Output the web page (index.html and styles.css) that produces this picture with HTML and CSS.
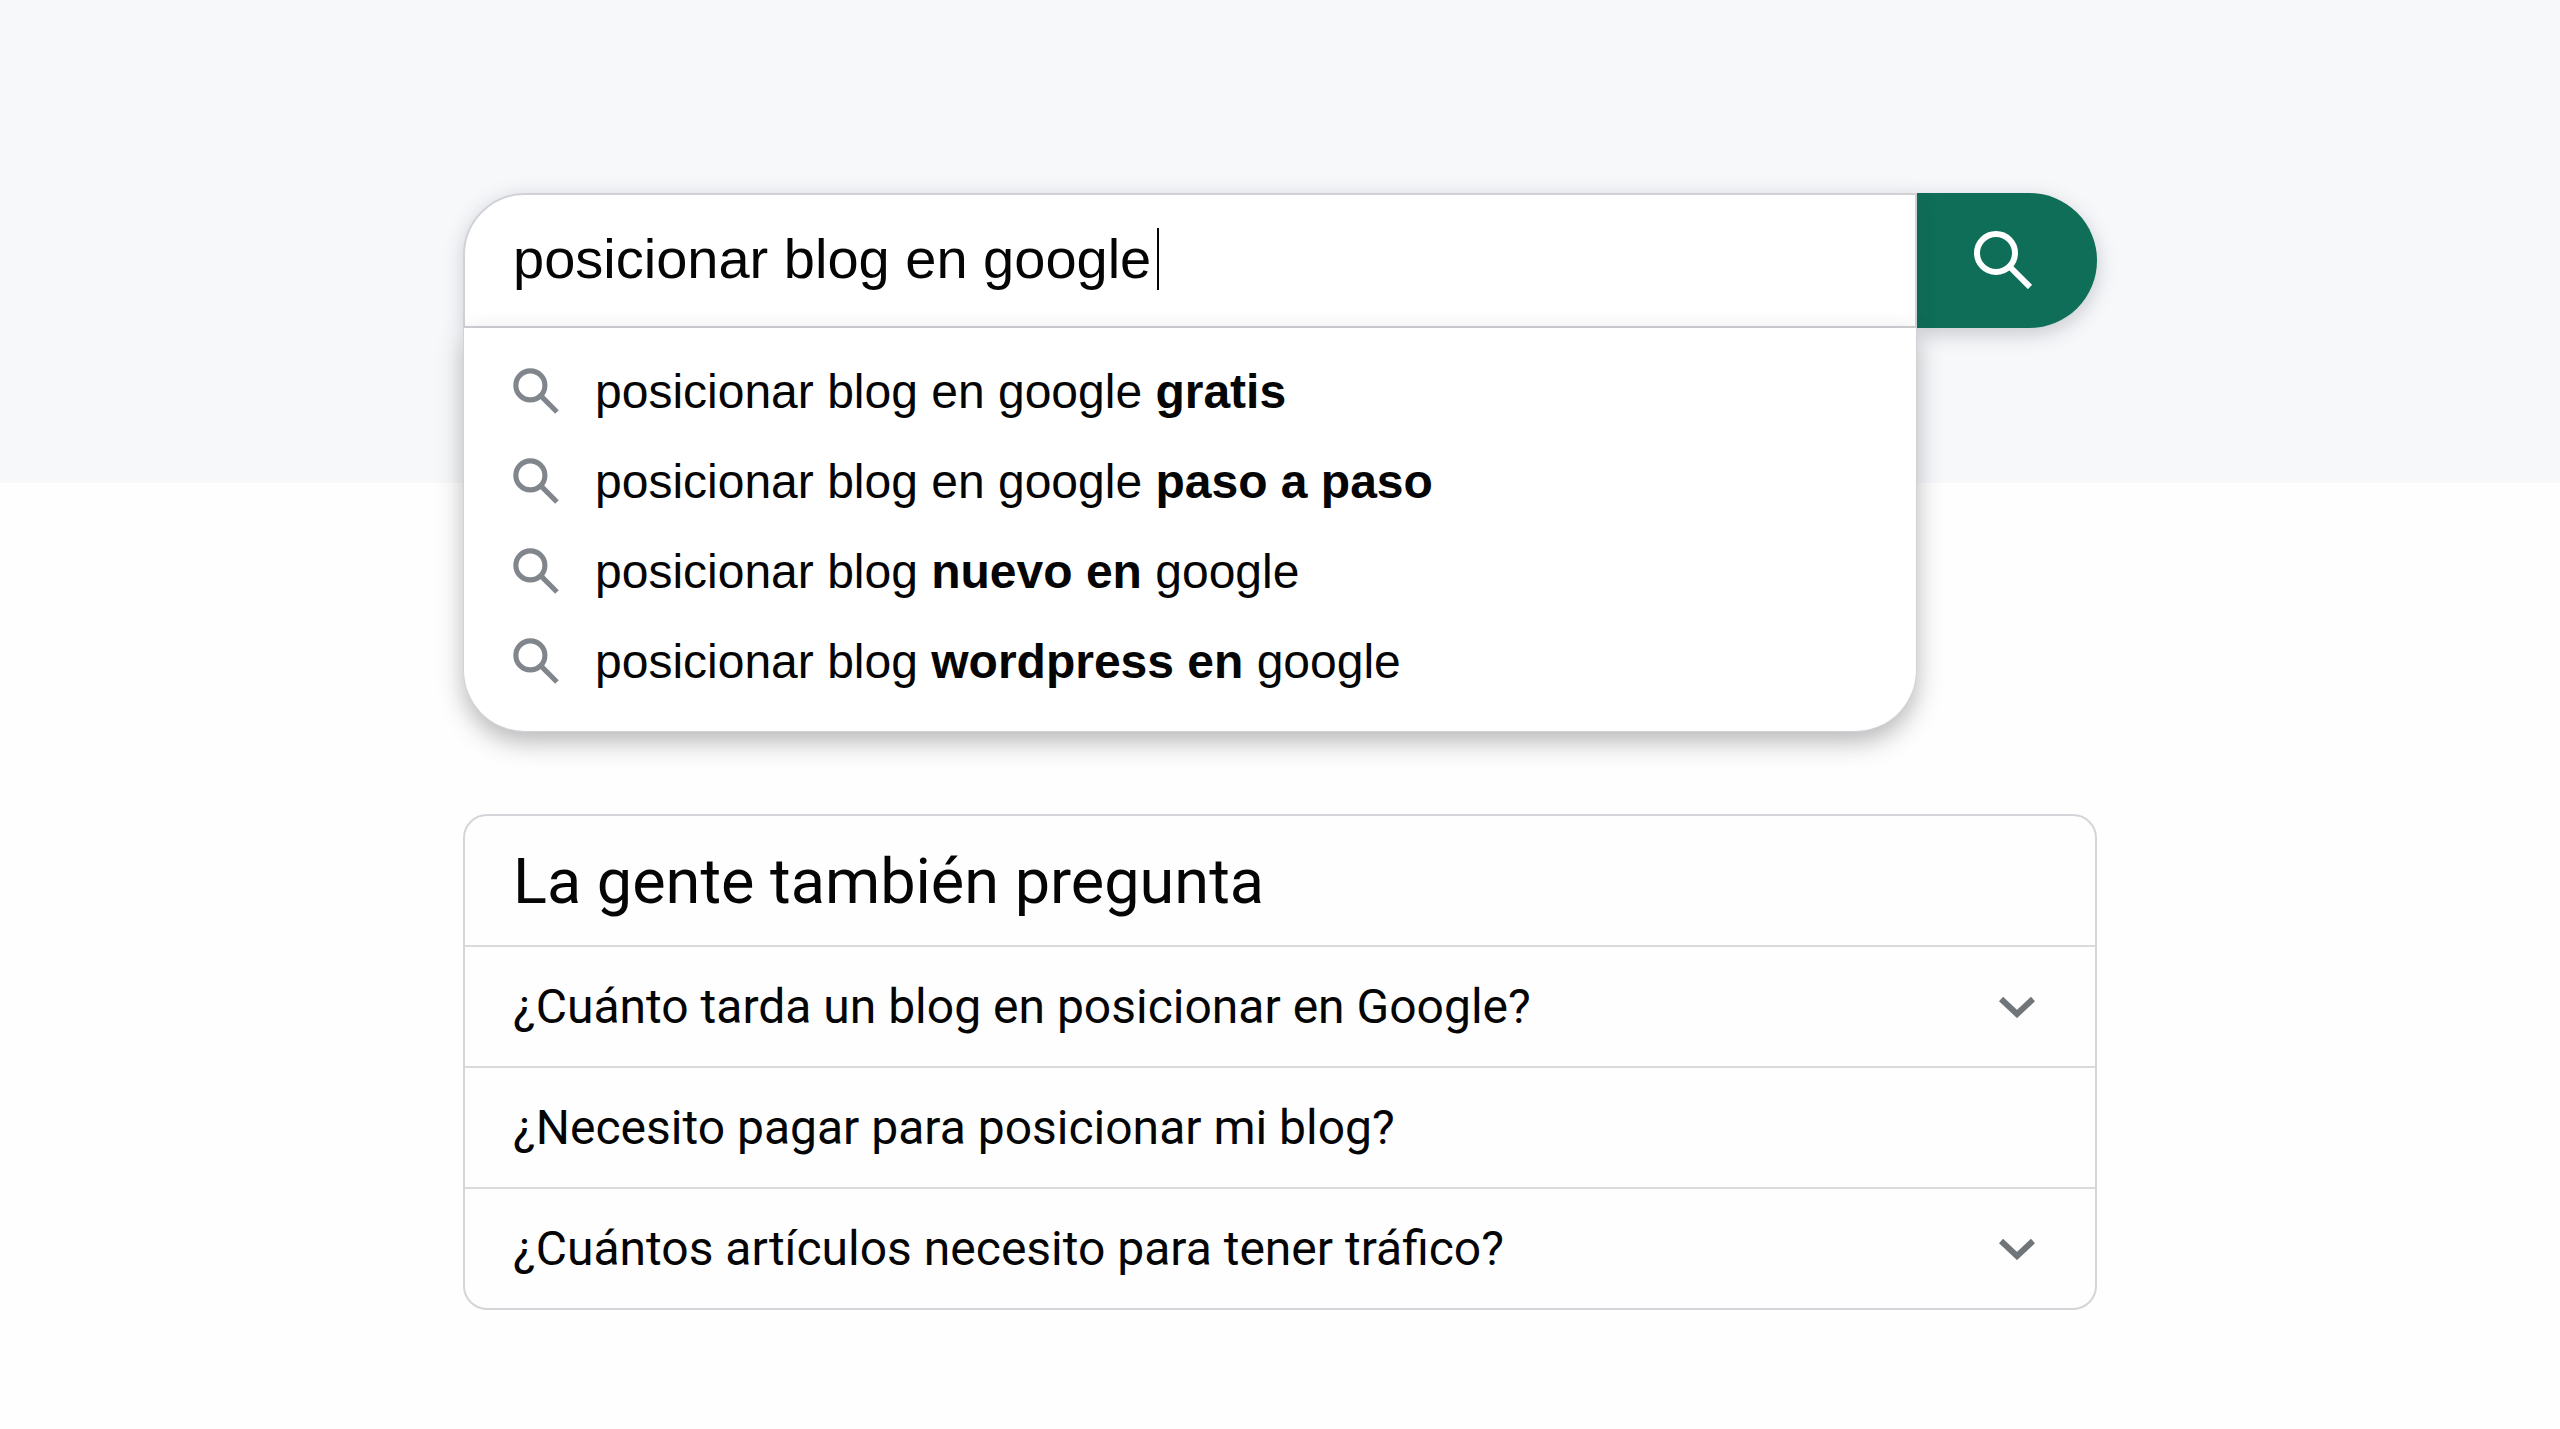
FILE: index.html
```html
<!DOCTYPE html>
<html lang="es">
<head>
  <meta charset="UTF-8" />
  <meta name="viewport" content="width=device-width, initial-scale=1.0" />
  <title>posicionar blog en google</title>
  <link rel="stylesheet" href="styles.css">
</head>
<body>
  <svg class="sprite" aria-hidden="true">
    <symbol id="lupa" viewBox="0 0 45 45">
      <circle cx="17" cy="17" r="14.2" fill="none" stroke="currentColor" stroke-width="5" />
      <path d="M28 28L43 43" fill="none" stroke="currentColor" stroke-width="5" />
    </symbol>
    <symbol id="flecha" viewBox="0 0 36 22">
      <path d="M2 3L18 18L34 3" fill="none" stroke="currentColor" stroke-width="6" />
    </symbol>
  </svg>

  <header class="hero">
    <form class="container search">
      <div class="search-box">
        <label class="field">
          <input type="text" class="search-input" value="posicionar blog en google" aria-label="Buscar" />
          <span class="caret"></span>
        </label>
        <ul class="suggestions">
          <li><a href="#"><svg class="icon"><use href="#lupa" /></svg><span>posicionar blog en google <b>gratis</b></span></a></li>
          <li><a href="#"><svg class="icon"><use href="#lupa" /></svg><span>posicionar blog en google <b>paso a paso</b></span></a></li>
          <li><a href="#"><svg class="icon"><use href="#lupa" /></svg><span>posicionar blog <b>nuevo en</b> google</span></a></li>
          <li><a href="#"><svg class="icon"><use href="#lupa" /></svg><span>posicionar blog <b>wordpress en</b> google</span></a></li>
        </ul>
      </div>
      <button type="submit" class="search-btn" aria-label="Buscar">
        <svg class="icon-lg" viewBox="0 0 58 58">
          <circle cx="22" cy="22" r="19" fill="none" stroke="currentColor" stroke-width="6" />
          <path d="M35 35L56 56" fill="none" stroke="currentColor" stroke-width="6" />
        </svg>
      </button>
    </form>
  </header>

  <main class="container questions">
    <h2>La gente también pregunta</h2>
    <button type="button" class="question">
      <span>¿Cuánto tarda un blog en posicionar en Google?</span>
      <svg class="chevron"><use href="#flecha" /></svg>
    </button>
    <button type="button" class="question">
      <span>¿Necesito pagar para posicionar mi blog?</span>
    </button>
    <button type="button" class="question">
      <span>¿Cuántos artículos necesito para tener tráfico?</span>
      <svg class="chevron"><use href="#flecha" /></svg>
    </button>
  </main>
</body>
</html>
```

FILE: styles.css
```css
* {
  box-sizing: border-box;
}

body {
  margin: 0;
  background-color: #fefefe;
  color: #050505;
  font-family: "Liberation Sans", Arial, sans-serif;
}

.sprite {
  display: none;
}

.container {
  width: 90%;
  max-width: 1634px;
  margin: 0 auto;
}

.hero {
  background-color: #f7f8fa;
  padding: 193px 0 155px;
}

.search {
  display: flex;
  height: 135px;
}

.search-box {
  position: relative;
  flex: 1;
}

.field {
  display: flex;
  align-items: center;
  height: 100%;
  padding: 0 50px 4px 48px;
  background-color: #fff;
  border: 2px solid #d0d2d6;
  border-radius: 62px 0 0 0;
  box-shadow: 0 4px 20px rgba(60, 64, 80, 0.22);
}

.search-input {
  field-sizing: content;
  padding: 0;
  border: none;
  outline: none;
  background: none;
  color: inherit;
  font: 56px "Liberation Sans", Arial, sans-serif;
}

.caret {
  width: 2px;
  height: 62px;
  margin-left: 6px;
  background-color: #050505;
}

/* drops down over the page, under the search field */
.suggestions {
  position: absolute;
  top: 100%;
  left: 0;
  right: 0;
  margin: 0;
  padding: 18px 0 25px;
  list-style: none;
  background-color: #fff;
  border: 1px solid #d0d2d6;
  border-top: none;
  border-radius: 0 0 62px 62px;
  box-shadow: 0 10px 24px rgba(50, 50, 55, 0.34);
}

.suggestions a {
  display: flex;
  align-items: center;
  gap: 36px;
  height: 90px;
  padding: 0 49px;
  color: inherit;
  font-size: 48px;
  text-decoration: none;
}

.icon {
  width: 46px;
  height: 46px;
  color: #80868b;
}

.search-btn {
  display: flex;
  align-items: center;
  justify-content: center;
  width: 180px;
  padding: 0 8px 2px 0;
  border: none;
  border-radius: 0 68px 68px 0;
  background-color: #0e6e57;
  color: #fff;
  box-shadow: 0 6px 20px rgba(60, 64, 80, 0.26);
  cursor: pointer;
}

.icon-lg {
  width: 58px;
  height: 58px;
}

.questions {
  margin-top: 331px;
  margin-bottom: 118px;
  border: 2px solid #d3d5d8;
  border-radius: 24px;
  font-family: Roboto, sans-serif;
}

.questions h2 {
  margin: 0;
  padding: 2px 48px 0;
  font-size: 63px;
  font-weight: 400;
  line-height: 127px;
}

.question {
  display: flex;
  align-items: center;
  justify-content: space-between;
  width: 100%;
  height: 121px;
  padding: 0 60px 0 48px;
  border: none;
  border-top: 2px solid #d9dadc;
  background: none;
  color: inherit;
  font: 48px Roboto, sans-serif;
  cursor: pointer;
}

.chevron {
  width: 36px;
  height: 22px;
  color: #70757a;
}
```
